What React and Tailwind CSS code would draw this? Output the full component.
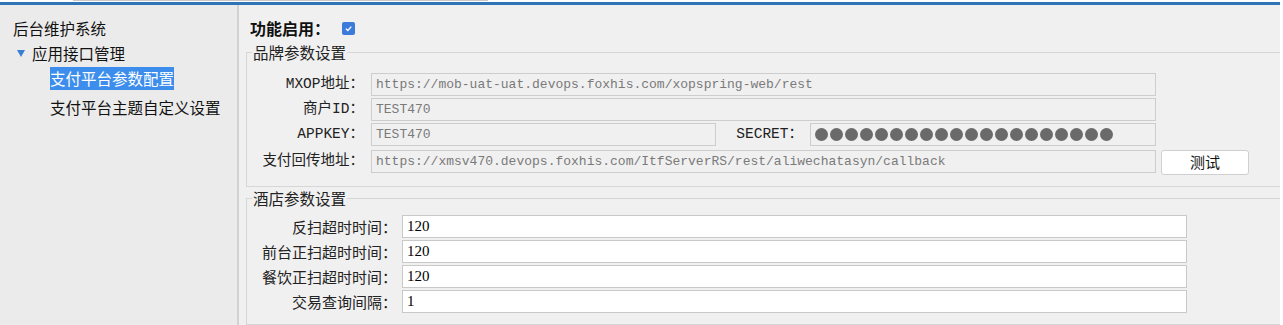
import React from 'react';

const cjk = { fontFamily: '"Noto Sans CJK SC", "Noto Sans", sans-serif' };
const mono = { fontFamily: '"Liberation Mono", "Noto Sans CJK SC", monospace' };
const serif = { fontFamily: '"Liberation Serif", "Noto Sans CJK SC", serif' };

const brandRows = [
    { label: 'MXOP地址：', value: 'https://mob-uat-uat.devops.foxhis.com/xopspring-web/rest' },
    { label: '商户ID：', value: 'TEST470' },
];

const hotelRows = [
    { label: '反扫超时时间：', value: '120' },
    { label: '前台正扫超时时间：', value: '120' },
    { label: '餐饮正扫超时时间：', value: '120' },
    { label: '交易查询间隔：', value: '1' },
];

const ReadOnlyBox = ({ value, className = '' }) => (
    <div
        className={`h-[23px] border border-[#cdcdcd] bg-[#f0f0f0] px-[4px] text-[13px] leading-[21px] text-[#7a7a7a] overflow-hidden whitespace-nowrap ${className}`}
        style={mono}
    >
        {value}
    </div>
);

const BrandLabel = ({ children, className = 'w-[112px]' }) => (
    <div className={`${className} shrink-0 text-right text-[14.5px] leading-[23px] text-[#222]`} style={mono}>
        {children}
    </div>
);

const Sidebar = () => (
    <div className="w-[237px] shrink-0 bg-[#ebebeb] pt-[11px] text-[15.5px] text-[#111]" style={cjk}>
        <div className="h-[25px] leading-[25px] pl-[13px]">后台维护系统</div>
        <div className="h-[25px] flex items-center pl-[17px]">
            <svg width="8" height="7" viewBox="0 0 8 7" className="mr-[7px]">
                <path d="M0 0 H8 L4 7 Z" fill="#3b7fd4" />
            </svg>
            <span className="leading-[25px]">应用接口管理</span>
        </div>
        <div className="pl-[50px] mt-[1px]">
            <span className="inline-block h-[23px] leading-[23px] bg-[#3d8eec] text-white">支付平台参数配置</span>
        </div>
        <div className="h-[25px] leading-[25px] pl-[50px] mt-[5px]">支付平台主题自定义设置</div>
    </div>
);

const Main = () => (
    <div className="flex-1 bg-[#f0f0f0] pt-[11px] pl-[7px]" style={cjk}>
        <div className="h-[24px] flex items-center pl-[4px]">
            <span className="text-[16px] font-bold text-[#111] leading-[24px]">功能启用：</span>
            <span className="ml-[12px] w-[13px] h-[13px] rounded-[2px] bg-[#3c7bd9] flex items-center justify-center">
                <svg width="9" height="9" viewBox="0 0 9 9">
                    <path d="M1.8 4.6 L3.8 6.5 L7.3 2.6" stroke="white" strokeWidth="1.3" fill="none" />
                </svg>
            </span>
        </div>

        <fieldset className="mt-[2px] border border-r-0 border-[#d6d6d6] pl-[5px] pt-[11px] pb-[11px]">
            <legend className="px-[1px] text-[15.5px] leading-[20px] text-[#222]">品牌参数设置</legend>
            <div className="flex flex-col gap-[2px]">
                {brandRows.map(row => (
                    <div key={row.label} className="flex items-center">
                        <BrandLabel>{row.label}</BrandLabel>
                        <ReadOnlyBox value={row.value} className="ml-[7px] w-[785px]" />
                    </div>
                ))}
                <div className="flex items-center">
                    <BrandLabel>APPKEY：</BrandLabel>
                    <ReadOnlyBox value="TEST470" className="ml-[7px] w-[345px]" />
                    <BrandLabel className="w-[87px]">SECRET：</BrandLabel>
                    <div className="ml-[7px] w-[346px] h-[23px] border border-[#cdcdcd] bg-[#f0f0f0] flex items-center gap-[2px] pl-[4px]">
                        {Array.from({ length: 20 }).map((_, i) => (
                            <span key={i} className="w-[13px] h-[13px] rounded-full bg-[#6a6a6a]" />
                        ))}
                    </div>
                </div>
                <div className="flex items-center">
                    <BrandLabel>支付回传地址：</BrandLabel>
                    <ReadOnlyBox
                        value="https://xmsv470.devops.foxhis.com/ItfServerRS/rest/aliwechatasyn/callback"
                        className="ml-[7px] w-[785px]"
                    />
                    <button className="ml-[5px] w-[88px] h-[25px] mt-[2px] rounded-[3px] border border-[#cfcfcf] bg-white text-[15px] text-[#111]">
                        测试
                    </button>
                </div>
            </div>
        </fieldset>

        <fieldset className="mt-[1px] border border-r-0 border-[#d6d6d6] pl-[5px] pt-[7px] pb-[11px]">
            <legend className="px-[1px] text-[15.5px] leading-[20px] text-[#222]">酒店参数设置</legend>
            <div className="flex flex-col gap-[2px]">
                {hotelRows.map(row => (
                    <div key={row.label} className="flex items-center">
                        <div className="w-[145px] shrink-0 text-right text-[15px] leading-[23px] text-[#222]">{row.label}</div>
                        <div
                            className="ml-[5px] w-[785px] h-[23px] border border-[#c9c9c9] bg-white px-[4px] text-[15px] leading-[21px] text-black"
                            style={serif}
                        >
                            {row.value}
                        </div>
                    </div>
                ))}
            </div>
        </fieldset>
    </div>
);

export default function App() {
    return (
        <div className="w-[1283px] h-[325px] bg-white overflow-hidden flex flex-col">
            <div className="h-[2px] relative">
                <div className="absolute left-[73px] top-0 w-[415px] h-[1px] bg-[#c8c8c8]" />
            </div>
            <div className="h-[3px] w-[1280px] bg-[#2f74b7]" />
            <div className="flex flex-1 w-[1280px]">
                <Sidebar />
                <div className="w-[2px] bg-[#d2d2d2]" />
                <Main />
            </div>
        </div>
    );
}
